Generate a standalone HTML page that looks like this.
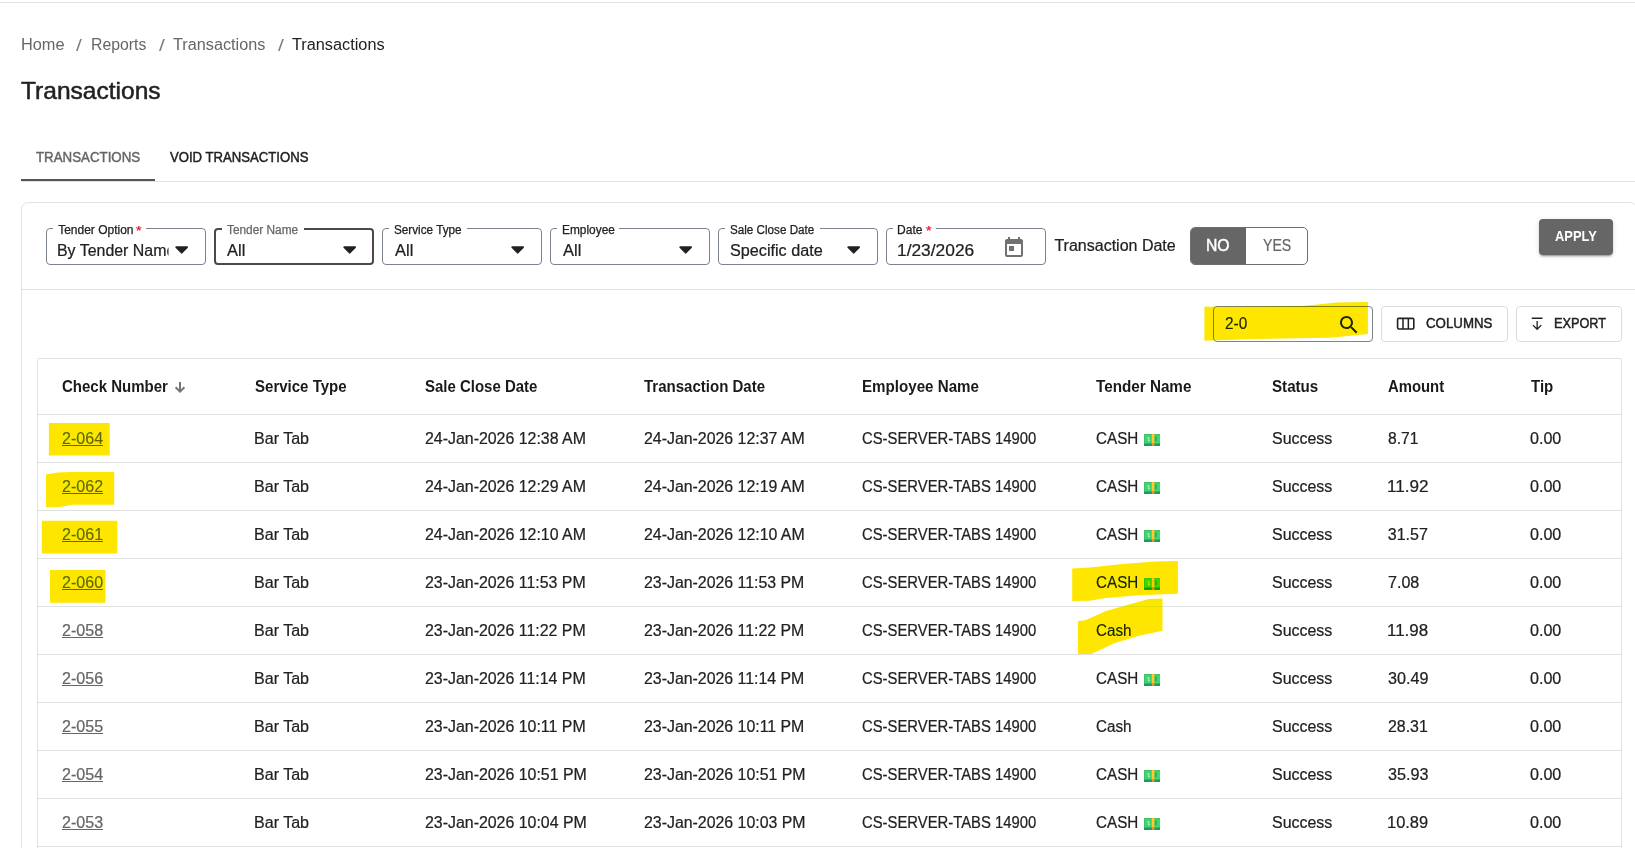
<!DOCTYPE html>
<html lang="en"><head><meta charset="utf-8"><title>Transactions</title>
<style>
*{box-sizing:border-box}
html,body{margin:0;padding:0;background:#fff}
body{font-family:"Liberation Sans",sans-serif;color:#212121;overflow:hidden}
#root{position:relative;width:1635px;height:848px;overflow:hidden;background:#fff}
.t{position:absolute;white-space:nowrap;transform-origin:0 0;display:block}
.f12{font-size:12px;line-height:14px;height:14px}
.f14{font-size:14px;line-height:18px;height:18px}
.f16{font-size:16px;line-height:20px;height:20px;-webkit-text-stroke:0.22px}
.f24{font-size:24px;line-height:30px;height:30px}
.bc{-webkit-text-stroke:0 !important}
.u{text-decoration:underline;text-decoration-thickness:1px;text-underline-offset:0.7px}
.a{position:absolute}
.ln{position:absolute;background:#e0e0e0;height:1px}
.fld{position:absolute;top:228px;height:37px;width:160px;border:1px solid #7c838e;border-radius:4px}
.fld.foc{border:2px solid #4a4a4a}
.notch{position:absolute;top:226px;height:5px;background:#fff}
.btn{position:absolute;top:306px;height:36px;border:1px solid #dcdcdc;border-radius:4px}
.hl{position:absolute;left:0;top:0;mix-blend-mode:darken;pointer-events:none}
</style></head>
<body><div id="root">
<div class="ln" style="left:0;top:2px;width:1635px;background:#e0e0e0"></div>
<div class="ln" style="left:21px;top:181px;width:1614px"></div>
<div class="a" style="left:21px;top:178.8px;width:134px;height:2.3px;background:#555"></div>
<div class="a" style="left:21px;top:202px;width:1615.5px;height:700px;border:1px solid #e2e2e2;border-radius:7px"></div>
<div class="ln" style="left:22px;top:289px;width:1613px"></div>
<div class="fld" style="left:46px"></div>
<div class="notch" style="left:52.8px;width:93.5px"></div>
<div class="fld foc" style="left:214px"></div>
<div class="notch" style="left:221.5px;width:82.1px"></div>
<div class="fld" style="left:382px"></div>
<div class="notch" style="left:388.8px;width:78.5px"></div>
<div class="fld" style="left:550px"></div>
<div class="notch" style="left:556.8px;width:62.5px"></div>
<div class="fld" style="left:718px"></div>
<div class="notch" style="left:724.8px;width:94.8px"></div>
<div class="fld" style="left:886px"></div>
<div class="notch" style="left:892.8px;width:43.1px"></div>
<svg class="a" style="left:175.2px;top:245.8px" width="13.4" height="8" viewBox="0 0 13.4 8"><path d="M1.2 0.3h11a.9.9 0 0 1 .65 1.5L7.4 7.3a1 1 0 0 1-1.4 0L.55 1.8A.9.9 0 0 1 1.2.3z" fill="#212121"/></svg>
<svg class="a" style="left:342.9px;top:245.8px" width="13.4" height="8" viewBox="0 0 13.4 8"><path d="M1.2 0.3h11a.9.9 0 0 1 .65 1.5L7.4 7.3a1 1 0 0 1-1.4 0L.55 1.8A.9.9 0 0 1 1.2.3z" fill="#212121"/></svg>
<svg class="a" style="left:511.2px;top:245.8px" width="13.4" height="8" viewBox="0 0 13.4 8"><path d="M1.2 0.3h11a.9.9 0 0 1 .65 1.5L7.4 7.3a1 1 0 0 1-1.4 0L.55 1.8A.9.9 0 0 1 1.2.3z" fill="#212121"/></svg>
<svg class="a" style="left:678.9px;top:245.8px" width="13.4" height="8" viewBox="0 0 13.4 8"><path d="M1.2 0.3h11a.9.9 0 0 1 .65 1.5L7.4 7.3a1 1 0 0 1-1.4 0L.55 1.8A.9.9 0 0 1 1.2.3z" fill="#212121"/></svg>
<svg class="a" style="left:847.0px;top:245.8px" width="13.4" height="8" viewBox="0 0 13.4 8"><path d="M1.2 0.3h11a.9.9 0 0 1 .65 1.5L7.4 7.3a1 1 0 0 1-1.4 0L.55 1.8A.9.9 0 0 1 1.2.3z" fill="#212121"/></svg>
<svg class="a" style="left:1002px;top:235.7px" width="24" height="24" viewBox="0 0 24 24"><path fill="#717171" d="M19 3h-1V1h-2v2H8V1H6v2H5c-1.11 0-1.99.9-1.99 2L3 19c0 1.1.89 2 2 2h14c1.1 0 2-.9 2-2V5c0-1.1-.9-2-2-2zm0 16H5V8h14v11zM7 10h5v5H7z"/></svg>
<div class="a" style="left:1190px;top:227px;width:118px;height:38px;border:1px solid #6e6e6e;border-radius:5px;overflow:hidden"><div style="width:55px;height:100%;background:#666"></div></div>
<div class="a" style="left:1539px;top:219px;width:74px;height:36px;background:#666;border-radius:4px;box-shadow:0 3px 1px -2px rgba(0,0,0,.2),0 2px 2px 0 rgba(0,0,0,.14),0 1px 5px 0 rgba(0,0,0,.12)"></div>
<div class="btn" style="left:1213px;width:160px;border-color:#7c838e"></div>
<svg class="a" style="left:1337.2px;top:313.2px" width="24" height="24" viewBox="0 0 24 24"><path fill="#212121" d="M15.5 14h-.79l-.28-.27C15.41 12.59 16 11.11 16 9.5 16 5.91 13.09 3 9.5 3S3 5.91 3 9.5 5.91 16 9.5 16c1.61 0 3.09-.59 4.23-1.57l.27.28v.79l5 4.99L20.49 19l-4.99-5zm-6 0C7.01 14 5 11.99 5 9.5S7.01 5 9.5 5 14 7.01 14 9.5 11.99 14 9.5 14z"/></svg>
<div class="btn" style="left:1381px;width:126.5px"></div>
<div class="btn" style="left:1516px;width:106px"></div>
<svg class="a" style="left:1396px;top:317px" width="20" height="14" viewBox="0 0 20 14"><rect x="1.6" y="1.4" width="16.2" height="10.6" rx="1.2" fill="none" stroke="#212121" stroke-width="1.6"/><path d="M7 1.4v10.6M12.35 1.4v10.6" stroke="#212121" stroke-width="1.5"/></svg>
<svg class="a" style="left:1530px;top:316px" width="14" height="15" viewBox="0 0 14 15"><path d="M1.8 2.25H12.5M7.15 4.9v8.4M3 9.1l4.15 4.2 4.15-4.2" fill="none" stroke="#212121" stroke-width="1.3"/></svg>
<div class="a" style="left:37px;top:358px;width:1585px;height:600px;border:1px solid #e0e0e0;border-radius:2px"></div>
<div class="ln" style="left:38px;top:414px;width:1583px"></div>
<div class="ln" style="left:38px;top:462px;width:1583px"></div>
<div class="ln" style="left:38px;top:510px;width:1583px"></div>
<div class="ln" style="left:38px;top:558px;width:1583px"></div>
<div class="ln" style="left:38px;top:606px;width:1583px"></div>
<div class="ln" style="left:38px;top:654px;width:1583px"></div>
<div class="ln" style="left:38px;top:702px;width:1583px"></div>
<div class="ln" style="left:38px;top:750px;width:1583px"></div>
<div class="ln" style="left:38px;top:798px;width:1583px"></div>
<div class="ln" style="left:38px;top:846px;width:1583px"></div>
<svg class="a" style="left:172px;top:380px" width="16" height="16" viewBox="0 0 16 16"><path d="M8 2.1V12M3.6 7.2L8 11.6L12.4 7.2" fill="none" stroke="#757575" stroke-width="2"/></svg>
<svg class="a" style="left:1144.2px;top:434px" width="16" height="12" viewBox="0 0 16 12"><rect x="0" y="0" width="16" height="12" rx="1" fill="#3ed573"/><rect x="0" y="9.5" width="16" height="2.5" fill="#1e9a61"/><rect x="0" y="0.6" width="0.7" height="9" fill="#33bd6a"/><rect x="0" y="0" width="16" height="0.8" fill="#35c36a"/><path d="M10.6 1.7a3.3 3.3 0 0 1 0 6.4z" fill="#2fae68"/><rect x="7.9" y="0" width="2.5" height="9.4" fill="#ffc928"/><rect x="7.9" y="9.4" width="2.5" height="2.6" fill="#e8913a"/><path d="M3.6 3.2h1.8v1.5H3.6zM3.9 5.6h1.8v1.6H3.9z" fill="#d9efdf" opacity=".8"/></svg>
<svg class="a" style="left:1144.2px;top:482px" width="16" height="12" viewBox="0 0 16 12"><rect x="0" y="0" width="16" height="12" rx="1" fill="#3ed573"/><rect x="0" y="9.5" width="16" height="2.5" fill="#1e9a61"/><rect x="0" y="0.6" width="0.7" height="9" fill="#33bd6a"/><rect x="0" y="0" width="16" height="0.8" fill="#35c36a"/><path d="M10.6 1.7a3.3 3.3 0 0 1 0 6.4z" fill="#2fae68"/><rect x="7.9" y="0" width="2.5" height="9.4" fill="#ffc928"/><rect x="7.9" y="9.4" width="2.5" height="2.6" fill="#e8913a"/><path d="M3.6 3.2h1.8v1.5H3.6zM3.9 5.6h1.8v1.6H3.9z" fill="#d9efdf" opacity=".8"/></svg>
<svg class="a" style="left:1144.2px;top:530px" width="16" height="12" viewBox="0 0 16 12"><rect x="0" y="0" width="16" height="12" rx="1" fill="#3ed573"/><rect x="0" y="9.5" width="16" height="2.5" fill="#1e9a61"/><rect x="0" y="0.6" width="0.7" height="9" fill="#33bd6a"/><rect x="0" y="0" width="16" height="0.8" fill="#35c36a"/><path d="M10.6 1.7a3.3 3.3 0 0 1 0 6.4z" fill="#2fae68"/><rect x="7.9" y="0" width="2.5" height="9.4" fill="#ffc928"/><rect x="7.9" y="9.4" width="2.5" height="2.6" fill="#e8913a"/><path d="M3.6 3.2h1.8v1.5H3.6zM3.9 5.6h1.8v1.6H3.9z" fill="#d9efdf" opacity=".8"/></svg>
<svg class="a" style="left:1144.2px;top:578px" width="16" height="12" viewBox="0 0 16 12"><rect x="0" y="0" width="16" height="12" rx="1" fill="#3ed573"/><rect x="0" y="9.5" width="16" height="2.5" fill="#1e9a61"/><rect x="0" y="0.6" width="0.7" height="9" fill="#33bd6a"/><rect x="0" y="0" width="16" height="0.8" fill="#35c36a"/><path d="M10.6 1.7a3.3 3.3 0 0 1 0 6.4z" fill="#2fae68"/><rect x="7.9" y="0" width="2.5" height="9.4" fill="#ffc928"/><rect x="7.9" y="9.4" width="2.5" height="2.6" fill="#e8913a"/><path d="M3.6 3.2h1.8v1.5H3.6zM3.9 5.6h1.8v1.6H3.9z" fill="#d9efdf" opacity=".8"/></svg>
<svg class="a" style="left:1144.2px;top:674px" width="16" height="12" viewBox="0 0 16 12"><rect x="0" y="0" width="16" height="12" rx="1" fill="#3ed573"/><rect x="0" y="9.5" width="16" height="2.5" fill="#1e9a61"/><rect x="0" y="0.6" width="0.7" height="9" fill="#33bd6a"/><rect x="0" y="0" width="16" height="0.8" fill="#35c36a"/><path d="M10.6 1.7a3.3 3.3 0 0 1 0 6.4z" fill="#2fae68"/><rect x="7.9" y="0" width="2.5" height="9.4" fill="#ffc928"/><rect x="7.9" y="9.4" width="2.5" height="2.6" fill="#e8913a"/><path d="M3.6 3.2h1.8v1.5H3.6zM3.9 5.6h1.8v1.6H3.9z" fill="#d9efdf" opacity=".8"/></svg>
<svg class="a" style="left:1144.2px;top:770px" width="16" height="12" viewBox="0 0 16 12"><rect x="0" y="0" width="16" height="12" rx="1" fill="#3ed573"/><rect x="0" y="9.5" width="16" height="2.5" fill="#1e9a61"/><rect x="0" y="0.6" width="0.7" height="9" fill="#33bd6a"/><rect x="0" y="0" width="16" height="0.8" fill="#35c36a"/><path d="M10.6 1.7a3.3 3.3 0 0 1 0 6.4z" fill="#2fae68"/><rect x="7.9" y="0" width="2.5" height="9.4" fill="#ffc928"/><rect x="7.9" y="9.4" width="2.5" height="2.6" fill="#e8913a"/><path d="M3.6 3.2h1.8v1.5H3.6zM3.9 5.6h1.8v1.6H3.9z" fill="#d9efdf" opacity=".8"/></svg>
<svg class="a" style="left:1144.2px;top:818px" width="16" height="12" viewBox="0 0 16 12"><rect x="0" y="0" width="16" height="12" rx="1" fill="#3ed573"/><rect x="0" y="9.5" width="16" height="2.5" fill="#1e9a61"/><rect x="0" y="0.6" width="0.7" height="9" fill="#33bd6a"/><rect x="0" y="0" width="16" height="0.8" fill="#35c36a"/><path d="M10.6 1.7a3.3 3.3 0 0 1 0 6.4z" fill="#2fae68"/><rect x="7.9" y="0" width="2.5" height="9.4" fill="#ffc928"/><rect x="7.9" y="9.4" width="2.5" height="2.6" fill="#e8913a"/><path d="M3.6 3.2h1.8v1.5H3.6zM3.9 5.6h1.8v1.6H3.9z" fill="#d9efdf" opacity=".8"/></svg>
<span class="t f16 bc" style="left:20.82px;top:35.20px;transform:scaleX(1.0201);color:#666666;">Home</span>
<span class="t f16 bc" style="left:76.12px;top:35.20px;transform:scale(1.3,1.07);color:#7d7d7d;">/</span>
<span class="t f16 bc" style="left:91.27px;top:35.20px;transform:scaleX(0.9876);color:#666666;">Reports</span>
<span class="t f16 bc" style="left:158.82px;top:35.20px;transform:scale(1.3,1.07);color:#7d7d7d;">/</span>
<span class="t f16 bc" style="left:172.95px;top:35.20px;transform:scaleX(1.0150);color:#666666;">Transactions</span>
<span class="t f16 bc" style="left:277.53px;top:35.20px;transform:scale(1.3,1.07);color:#7d7d7d;">/</span>
<span class="t f16 bc" style="left:291.85px;top:35.20px;transform:scaleX(1.0172);">Transactions</span>
<span class="t f24 h1" style="left:21.02px;top:76.20px;transform:scaleX(1.0223);-webkit-text-stroke:0.5px;">Transactions</span>
<span class="t f14" style="left:36.09px;top:148.30px;transform:scaleX(0.9498);color:#666666;-webkit-text-stroke:0.45px;">TRANSACTIONS</span>
<span class="t f14" style="left:170.10px;top:148.30px;transform:scaleX(0.9381);-webkit-text-stroke:0.45px;">VOID TRANSACTIONS</span>
<span class="t f12" style="left:58.15px;top:222.80px;-webkit-text-stroke:0.25px;">Tender Option</span>
<span class="t f12" style="left:135.82px;top:223.60px;transform:scaleX(1.1724);color:#f0142f;-webkit-text-stroke:0.25px;">*</span>
<span class="t f12" style="left:226.95px;top:222.80px;transform:scaleX(0.9879);color:#666666;-webkit-text-stroke:0.25px;">Tender Name</span>
<span class="t f12" style="left:394.01px;top:222.80px;transform:scaleX(0.9775);-webkit-text-stroke:0.25px;">Service Type</span>
<span class="t f12" style="left:561.56px;top:222.80px;transform:scaleX(0.9906);-webkit-text-stroke:0.25px;">Employee</span>
<span class="t f12" style="left:729.81px;top:222.80px;transform:scaleX(0.9721);-webkit-text-stroke:0.25px;">Sale Close Date</span>
<span class="t f12" style="left:897.44px;top:222.80px;transform:scaleX(1.0053);-webkit-text-stroke:0.25px;">Date</span>
<span class="t f12" style="left:925.52px;top:223.60px;transform:scaleX(1.1724);color:#f0142f;-webkit-text-stroke:0.25px;">*</span>
<span class="t f16" style="left:57.26px;top:240.70px;transform:scaleX(0.9955);width:112.11px;overflow:hidden;">By Tender Name</span>
<span class="t f16" style="left:226.50px;top:240.70px;transform:scaleX(1.0283);">All</span>
<span class="t f16" style="left:394.50px;top:240.70px;transform:scaleX(1.0283);">All</span>
<span class="t f16" style="left:562.50px;top:240.70px;transform:scaleX(1.0283);">All</span>
<span class="t f16" style="left:729.79px;top:240.70px;transform:scaleX(1.0115);">Specific date</span>
<span class="t f16" style="left:897.32px;top:240.70px;transform:scaleX(1.0844);">1/23/2026</span>
<span class="t f16" style="left:1054.45px;top:235.90px;">Transaction Date</span>
<span class="t f16" style="left:1206.07px;top:235.60px;transform:scaleX(0.9839);color:#fff;-webkit-text-stroke:0.45px;">NO</span>
<span class="t f16" style="left:1262.68px;top:235.60px;transform:scaleX(0.8812);color:#666666;">YES</span>
<span class="t f14" style="left:1555.00px;top:226.90px;transform:scaleX(0.9196);color:#fff;font-weight:700;-webkit-text-stroke:0;">APPLY</span>
<span class="t f16" style="left:1224.98px;top:313.80px;transform:scaleX(0.9601);">2-0</span>
<span class="t f14" style="left:1425.78px;top:313.90px;transform:scaleX(0.9482);-webkit-text-stroke:0.45px;">COLUMNS</span>
<span class="t f14" style="left:1553.71px;top:313.90px;transform:scaleX(0.9093);-webkit-text-stroke:0.45px;">EXPORT</span>
<span class="t f16" style="left:61.83px;top:377.10px;transform:scaleX(0.9377);color:#1a1a1a;font-weight:700;-webkit-text-stroke:0;">Check Number</span>
<span class="t f16" style="left:254.77px;top:377.10px;transform:scaleX(0.9392);color:#1a1a1a;font-weight:700;-webkit-text-stroke:0;">Service Type</span>
<span class="t f16" style="left:425.17px;top:377.10px;transform:scaleX(0.9363);color:#1a1a1a;font-weight:700;-webkit-text-stroke:0;">Sale Close Date</span>
<span class="t f16" style="left:644.30px;top:377.10px;transform:scaleX(0.9391);color:#1a1a1a;font-weight:700;-webkit-text-stroke:0;">Transaction Date</span>
<span class="t f16" style="left:861.65px;top:377.10px;transform:scaleX(0.9459);color:#1a1a1a;font-weight:700;-webkit-text-stroke:0;">Employee Name</span>
<span class="t f16" style="left:1096.40px;top:377.10px;transform:scaleX(0.9521);color:#1a1a1a;font-weight:700;-webkit-text-stroke:0;">Tender Name</span>
<span class="t f16" style="left:1272.16px;top:377.10px;transform:scaleX(0.9458);color:#1a1a1a;font-weight:700;-webkit-text-stroke:0;">Status</span>
<span class="t f16" style="left:1387.97px;top:377.10px;transform:scaleX(0.9284);color:#1a1a1a;font-weight:700;-webkit-text-stroke:0;">Amount</span>
<span class="t f16" style="left:1530.90px;top:377.10px;transform:scaleX(0.9362);color:#1a1a1a;font-weight:700;-webkit-text-stroke:0;">Tip</span>
<span class="t f16 u" style="left:61.55px;top:429.20px;transform:scaleX(1.0032);color:#666666;">2-064</span>
<span class="t f16" style="left:253.75px;top:429.20px;transform:scaleX(1.0030);">Bar Tab</span>
<span class="t f16" style="left:424.65px;top:429.20px;transform:scaleX(0.9941);">24-Jan-2026 12:38 AM</span>
<span class="t f16" style="left:643.56px;top:429.20px;transform:scaleX(0.9923);">24-Jan-2026 12:37 AM</span>
<span class="t f16" style="left:861.90px;top:429.20px;transform:scaleX(0.9268);">CS-SERVER-TABS 14900</span>
<span class="t f16" style="left:1095.69px;top:429.20px;transform:scaleX(0.9505);">CASH</span>
<span class="t f16" style="left:1271.90px;top:429.20px;transform:scaleX(0.9972);">Success</span>
<span class="t f16" style="left:1387.81px;top:429.20px;transform:scaleX(0.9769);">8.71</span>
<span class="t f16" style="left:1530.40px;top:429.20px;transform:scaleX(1.0052);">0.00</span>
<span class="t f16 u" style="left:61.55px;top:477.20px;transform:scaleX(1.0032);color:#666666;">2-062</span>
<span class="t f16" style="left:253.75px;top:477.20px;transform:scaleX(1.0030);">Bar Tab</span>
<span class="t f16" style="left:424.65px;top:477.20px;transform:scaleX(0.9941);">24-Jan-2026 12:29 AM</span>
<span class="t f16" style="left:643.56px;top:477.20px;transform:scaleX(0.9923);">24-Jan-2026 12:19 AM</span>
<span class="t f16" style="left:861.90px;top:477.20px;transform:scaleX(0.9268);">CS-SERVER-TABS 14900</span>
<span class="t f16" style="left:1095.69px;top:477.20px;transform:scaleX(0.9505);">CASH</span>
<span class="t f16" style="left:1271.90px;top:477.20px;transform:scaleX(0.9972);">Success</span>
<span class="t f16" style="left:1387.23px;top:477.20px;transform:scaleX(1.0725);">11.92</span>
<span class="t f16" style="left:1530.40px;top:477.20px;transform:scaleX(1.0052);">0.00</span>
<span class="t f16 u" style="left:61.55px;top:525.20px;transform:scaleX(1.0032);color:#666666;">2-061</span>
<span class="t f16" style="left:253.75px;top:525.20px;transform:scaleX(1.0030);">Bar Tab</span>
<span class="t f16" style="left:424.65px;top:525.20px;transform:scaleX(0.9941);">24-Jan-2026 12:10 AM</span>
<span class="t f16" style="left:643.56px;top:525.20px;transform:scaleX(0.9923);">24-Jan-2026 12:10 AM</span>
<span class="t f16" style="left:861.90px;top:525.20px;transform:scaleX(0.9268);">CS-SERVER-TABS 14900</span>
<span class="t f16" style="left:1095.69px;top:525.20px;transform:scaleX(0.9505);">CASH</span>
<span class="t f16" style="left:1271.90px;top:525.20px;transform:scaleX(0.9972);">Success</span>
<span class="t f16" style="left:1387.80px;top:525.20px;">31.57</span>
<span class="t f16" style="left:1530.40px;top:525.20px;transform:scaleX(1.0052);">0.00</span>
<span class="t f16 u" style="left:61.55px;top:573.20px;transform:scaleX(1.0032);color:#666666;">2-060</span>
<span class="t f16" style="left:253.75px;top:573.20px;transform:scaleX(1.0030);">Bar Tab</span>
<span class="t f16" style="left:424.65px;top:573.20px;transform:scaleX(0.9941);">23-Jan-2026 11:53 PM</span>
<span class="t f16" style="left:643.56px;top:573.20px;transform:scaleX(0.9923);">23-Jan-2026 11:53 PM</span>
<span class="t f16" style="left:861.90px;top:573.20px;transform:scaleX(0.9268);">CS-SERVER-TABS 14900</span>
<span class="t f16" style="left:1095.69px;top:573.20px;transform:scaleX(0.9505);">CASH</span>
<span class="t f16" style="left:1271.90px;top:573.20px;transform:scaleX(0.9972);">Success</span>
<span class="t f16" style="left:1387.55px;top:573.20px;transform:scaleX(1.0053);">7.08</span>
<span class="t f16" style="left:1530.40px;top:573.20px;transform:scaleX(1.0052);">0.00</span>
<span class="t f16 u" style="left:61.55px;top:621.20px;transform:scaleX(1.0032);color:#666666;">2-058</span>
<span class="t f16" style="left:253.75px;top:621.20px;transform:scaleX(1.0030);">Bar Tab</span>
<span class="t f16" style="left:424.65px;top:621.20px;transform:scaleX(0.9941);">23-Jan-2026 11:22 PM</span>
<span class="t f16" style="left:643.56px;top:621.20px;transform:scaleX(0.9923);">23-Jan-2026 11:22 PM</span>
<span class="t f16" style="left:861.90px;top:621.20px;transform:scaleX(0.9268);">CS-SERVER-TABS 14900</span>
<span class="t f16" style="left:1095.69px;top:621.20px;transform:scaleX(0.9505);">Cash</span>
<span class="t f16" style="left:1271.90px;top:621.20px;transform:scaleX(0.9972);">Success</span>
<span class="t f16" style="left:1387.24px;top:621.20px;transform:scaleX(1.0591);">11.98</span>
<span class="t f16" style="left:1530.40px;top:621.20px;transform:scaleX(1.0052);">0.00</span>
<span class="t f16 u" style="left:61.55px;top:669.20px;transform:scaleX(1.0032);color:#666666;">2-056</span>
<span class="t f16" style="left:253.75px;top:669.20px;transform:scaleX(1.0030);">Bar Tab</span>
<span class="t f16" style="left:424.65px;top:669.20px;transform:scaleX(0.9941);">23-Jan-2026 11:14 PM</span>
<span class="t f16" style="left:643.56px;top:669.20px;transform:scaleX(0.9923);">23-Jan-2026 11:14 PM</span>
<span class="t f16" style="left:861.90px;top:669.20px;transform:scaleX(0.9268);">CS-SERVER-TABS 14900</span>
<span class="t f16" style="left:1095.69px;top:669.20px;transform:scaleX(0.9505);">CASH</span>
<span class="t f16" style="left:1271.90px;top:669.20px;transform:scaleX(0.9972);">Success</span>
<span class="t f16" style="left:1387.79px;top:669.20px;transform:scaleX(1.0131);">30.49</span>
<span class="t f16" style="left:1530.40px;top:669.20px;transform:scaleX(1.0052);">0.00</span>
<span class="t f16 u" style="left:61.55px;top:717.20px;transform:scaleX(1.0032);color:#666666;">2-055</span>
<span class="t f16" style="left:253.75px;top:717.20px;transform:scaleX(1.0030);">Bar Tab</span>
<span class="t f16" style="left:424.65px;top:717.20px;transform:scaleX(0.9941);">23-Jan-2026 10:11 PM</span>
<span class="t f16" style="left:643.56px;top:717.20px;transform:scaleX(0.9923);">23-Jan-2026 10:11 PM</span>
<span class="t f16" style="left:861.90px;top:717.20px;transform:scaleX(0.9268);">CS-SERVER-TABS 14900</span>
<span class="t f16" style="left:1095.69px;top:717.20px;transform:scaleX(0.9505);">Cash</span>
<span class="t f16" style="left:1271.90px;top:717.20px;transform:scaleX(0.9972);">Success</span>
<span class="t f16" style="left:1387.55px;top:717.20px;transform:scaleX(0.9938);">28.31</span>
<span class="t f16" style="left:1530.40px;top:717.20px;transform:scaleX(1.0052);">0.00</span>
<span class="t f16 u" style="left:61.55px;top:765.20px;transform:scaleX(1.0032);color:#666666;">2-054</span>
<span class="t f16" style="left:253.75px;top:765.20px;transform:scaleX(1.0030);">Bar Tab</span>
<span class="t f16" style="left:424.65px;top:765.20px;transform:scaleX(0.9941);">23-Jan-2026 10:51 PM</span>
<span class="t f16" style="left:643.56px;top:765.20px;transform:scaleX(0.9923);">23-Jan-2026 10:51 PM</span>
<span class="t f16" style="left:861.90px;top:765.20px;transform:scaleX(0.9268);">CS-SERVER-TABS 14900</span>
<span class="t f16" style="left:1095.69px;top:765.20px;transform:scaleX(0.9505);">CASH</span>
<span class="t f16" style="left:1271.90px;top:765.20px;transform:scaleX(0.9972);">Success</span>
<span class="t f16" style="left:1387.79px;top:765.20px;transform:scaleX(1.0131);">35.93</span>
<span class="t f16" style="left:1530.40px;top:765.20px;transform:scaleX(1.0052);">0.00</span>
<span class="t f16 u" style="left:61.55px;top:813.20px;transform:scaleX(1.0032);color:#666666;">2-053</span>
<span class="t f16" style="left:253.75px;top:813.20px;transform:scaleX(1.0030);">Bar Tab</span>
<span class="t f16" style="left:424.65px;top:813.20px;transform:scaleX(0.9941);">23-Jan-2026 10:04 PM</span>
<span class="t f16" style="left:643.56px;top:813.20px;transform:scaleX(0.9923);">23-Jan-2026 10:03 PM</span>
<span class="t f16" style="left:861.90px;top:813.20px;transform:scaleX(0.9268);">CS-SERVER-TABS 14900</span>
<span class="t f16" style="left:1095.69px;top:813.20px;transform:scaleX(0.9505);">CASH</span>
<span class="t f16" style="left:1271.90px;top:813.20px;transform:scaleX(0.9972);">Success</span>
<span class="t f16" style="left:1387.27px;top:813.20px;transform:scaleX(1.0263);">10.89</span>
<span class="t f16" style="left:1530.40px;top:813.20px;transform:scaleX(1.0052);">0.00</span>
<svg class="hl" width="1635" height="848" viewBox="0 0 1635 848" fill="#ffe600"><polygon points="1204.4,306.8 1302.6,305.9 1320,304.2 1336.3,302.4 1367.9,302.1 1367.9,334.1 1343,336.4 1329.5,337.8 1252.9,339 1204.4,340.7"/><polygon points="48.9,423 109.7,423 109.7,455.5 48.9,455.5"/><polygon points="46,474.5 58,472.6 70,472 114.2,472 114.2,504.8 72,504.8 60,507 46,507.2"/><polygon points="41.8,520.8 117.3,520.8 117.3,553.4 41.8,553.4"/><polygon points="50,569.9 105.5,569.9 105.5,602.7 50,602.7"/><polygon points="1072.2,568.4 1090,567.5 1122.6,564 1155.6,561.5 1177.9,561.1 1177.9,593.7 1139,595.3 1106,598 1089.5,600.8 1072.2,601.1"/><polygon points="1078,621.3 1086,620 1106,611 1132.5,603.6 1149,599.1 1162.5,598.6 1162.5,630.8 1139,635.8 1114.3,643.2 1097.8,651 1091.2,654 1078,654"/></svg>
</div></body></html>
